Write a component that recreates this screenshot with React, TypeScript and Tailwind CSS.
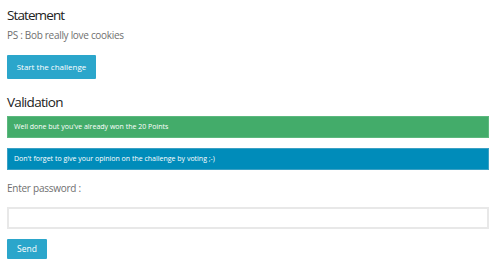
import React from "react";

export default function App() {
  return (
    <div
      className="w-[500px] h-[265px] bg-white px-[7px] pt-[6px] overflow-hidden"
      style={{ fontFamily: '"Open Sans", sans-serif' }}
    >
      <h2 className="text-[13.5px] leading-[18px] tracking-[-0.9px] text-[#222222]">Statement</h2>
      <p className="mt-[5px] text-[10px] leading-[13px] tracking-[-0.3px] text-[#6f6f6f]">PS : Bob really love cookies</p>
      <button className="block mt-[13px] h-[24px] w-[89px] bg-[#2ba6cb] text-white text-[8px] rounded-[1px]">
        Start the challenge
      </button>
      <h2 className="mt-[14px] text-[13.5px] leading-[18px] tracking-[-0.7px] text-[#222222]">Validation</h2>
      <div className="mt-[5px] h-[22px] w-[482px] bg-[#43ac6a] border border-[#5cb87e] text-white text-[7px] flex items-center pl-[6px]">
        Well done but you've already won the 20 Points
      </div>
      <div className="mt-[10px] h-[22px] w-[482px] bg-[#008cba] border border-[#3aa0c4] text-white text-[7px] flex items-center pl-[6px]">
        Don't forget to give your opinion on the challenge by voting ;-)
      </div>
      <p className="mt-[12px] text-[10px] leading-[13px] tracking-[-0.25px] text-[#6f6f6f]">Enter password :</p>
      <input className="block mt-[12px] h-[22px] w-[482px] border-2 border-[#e8e8e8] bg-white outline-none" />
      <button className="block mt-[10px] h-[20px] w-[40px] bg-[#2ba6cb] text-white text-[8.5px] rounded-[1px]">
        Send
      </button>
    </div>
  );
}
